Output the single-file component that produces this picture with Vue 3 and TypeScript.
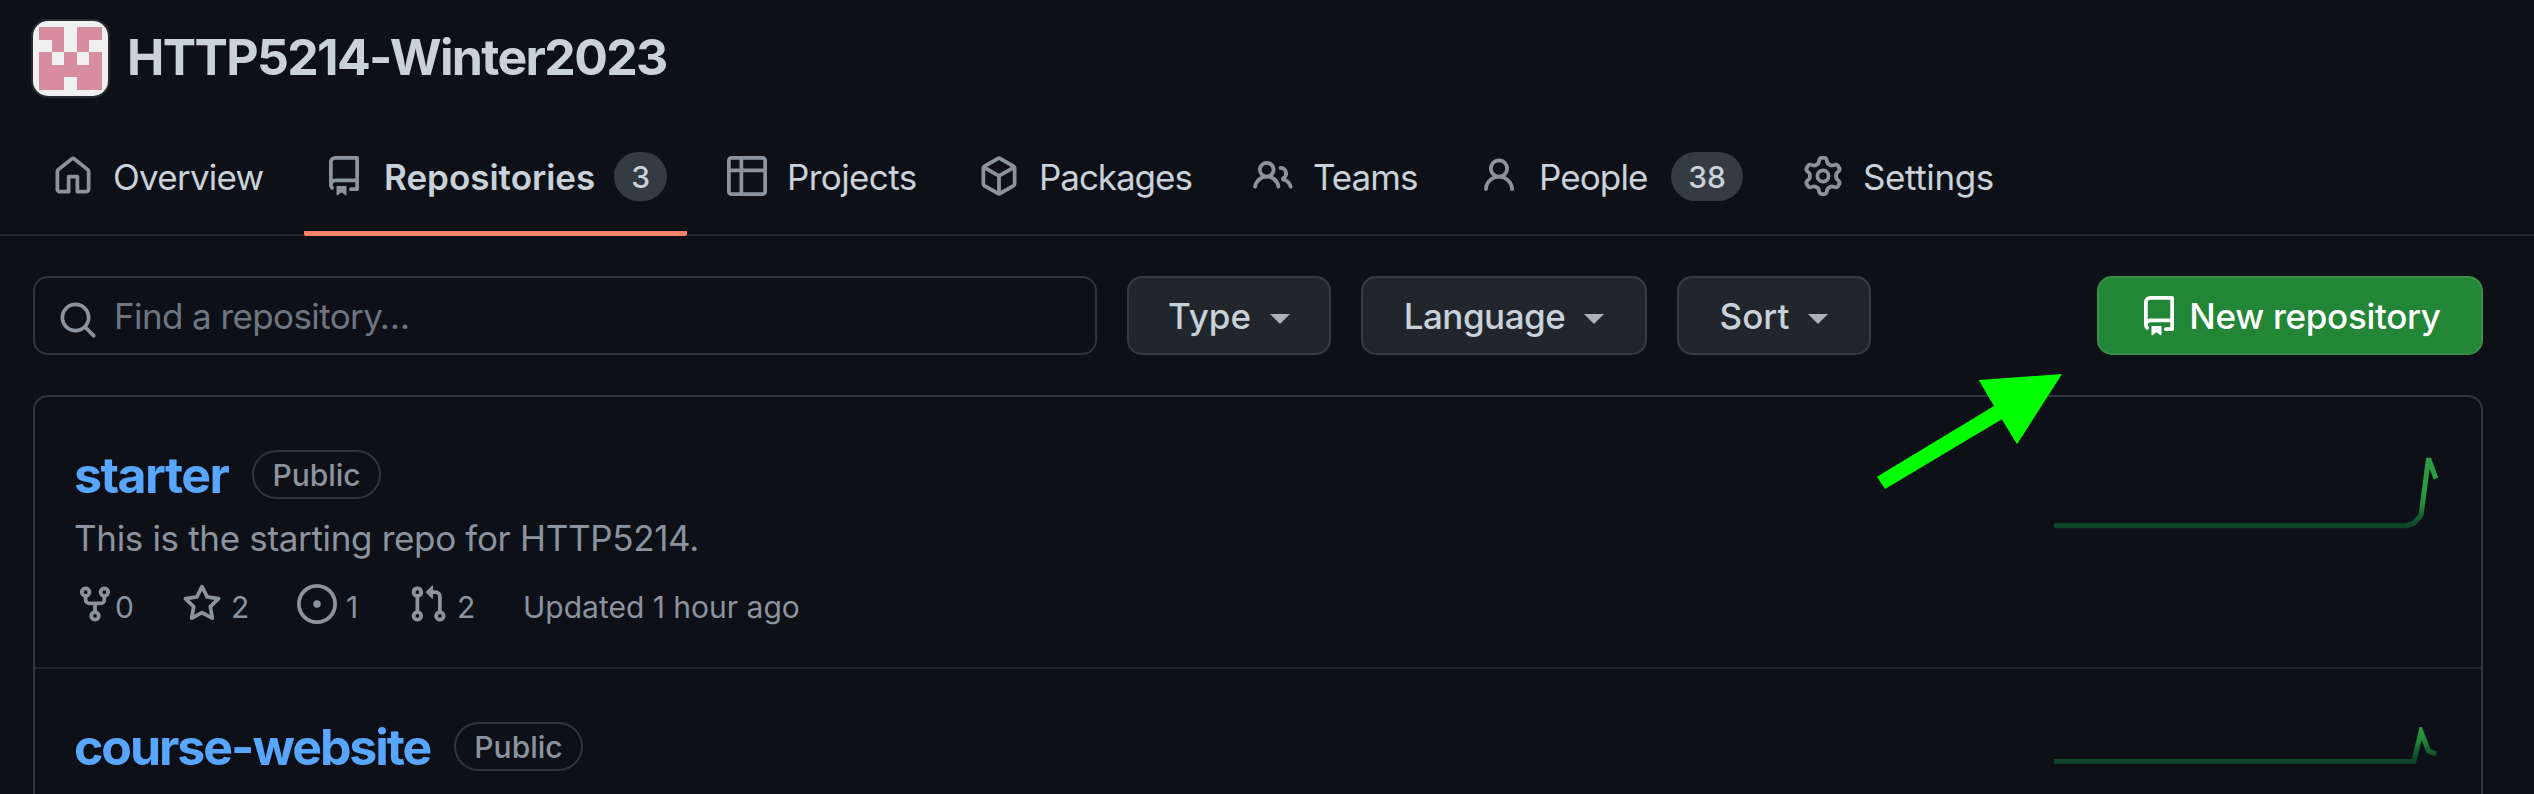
<script setup lang="ts">
interface Tab {
  key: string
  label: string
  icon: string
  count?: number
  active?: boolean
}

interface Stat {
  key: string
  icon: string
  value: number
}

interface Repo {
  name: string
  visibility: string
  description?: string
  updated?: string
  stats: Stat[]
  spark: string
}

const icons: Record<string, string> = {
  home: 'M6.906.664a1.749 1.749 0 0 1 2.187 0l5.25 4.2c.415.332.657.835.657 1.367v7.019A1.75 1.75 0 0 1 13.25 15h-3.5a.75.75 0 0 1-.75-.75V9H7v5.25a.75.75 0 0 1-.75.75h-3.5A1.75 1.75 0 0 1 1 13.25V6.23c0-.531.242-1.034.657-1.366l5.25-4.2Zm1.25 1.171a.25.25 0 0 0-.312 0l-5.25 4.2a.25.25 0 0 0-.094.196v7.019c0 .138.112.25.25.25H5.5V8.25a.75.75 0 0 1 .75-.75h3.5a.75.75 0 0 1 .75.75v5.25h2.75a.25.25 0 0 0 .25-.25V6.23a.25.25 0 0 0-.094-.195Z',
  repo: 'M2 2.5A2.5 2.5 0 0 1 4.5 0h8.75a.75.75 0 0 1 .75.75v12.5a.75.75 0 0 1-.75.75h-2.5a.75.75 0 0 1 0-1.5h1.75v-2h-8a1 1 0 0 0-.714 1.7.75.75 0 1 1-1.072 1.05A2.495 2.495 0 0 1 2 11.5Zm10.5-1h-8a1 1 0 0 0-1 1v6.708A2.486 2.486 0 0 1 4.5 9h8ZM5 12.25a.25.25 0 0 1 .25-.25h3.5a.25.25 0 0 1 .25.25v3.25a.25.25 0 0 1-.4.2l-1.45-1.087a.249.249 0 0 0-.3 0L5.4 15.7a.25.25 0 0 1-.4-.2Z',
  table: 'M0 1.75C0 .784.784 0 1.75 0h12.5C15.216 0 16 .784 16 1.75v12.5A1.75 1.75 0 0 1 14.25 16H1.75A1.75 1.75 0 0 1 0 14.25ZM6.5 6.5v8h7.75a.25.25 0 0 0 .25-.25V6.5Zm8-1.5V1.75a.25.25 0 0 0-.25-.25H6.5V5Zm-13 1.5v7.75c0 .138.112.25.25.25H5v-8ZM5 5V1.5H1.75a.25.25 0 0 0-.25.25V5Z',
  package: 'm8.878.392 5.25 3.045c.54.314.872.89.872 1.514v6.098a1.75 1.75 0 0 1-.872 1.514l-5.25 3.045a1.75 1.75 0 0 1-1.756 0l-5.25-3.045A1.75 1.75 0 0 1 1 11.049V4.951c0-.624.332-1.201.872-1.514L7.122.392a1.75 1.75 0 0 1 1.756 0ZM7.875 1.69l-4.63 2.685L8 7.133l4.755-2.758-4.63-2.685a.248.248 0 0 0-.25 0ZM2.5 5.677v5.372c0 .09.047.171.125.216l4.625 2.683V8.432Zm6.25 8.271 4.625-2.683a.25.25 0 0 0 .125-.216V5.677L8.75 8.432Z',
  people: 'M2 5.5a3.5 3.5 0 1 1 5.898 2.549 5.508 5.508 0 0 1 3.034 4.084.75.75 0 1 1-1.482.235 4 4 0 0 0-7.9 0 .75.75 0 0 1-1.482-.236A5.507 5.507 0 0 1 3.102 8.05 3.493 3.493 0 0 1 2 5.5ZM11 4a3.001 3.001 0 0 1 2.22 5.018 5.01 5.01 0 0 1 2.56 3.012.749.749 0 0 1-.885.954.752.752 0 0 1-.549-.514 3.507 3.507 0 0 0-2.522-2.372.75.75 0 0 1-.574-.73v-.352a.75.75 0 0 1 .416-.672A1.5 1.5 0 0 0 11 5.5.75.75 0 0 1 11 4Zm-5.5-.5a2 2 0 1 0-.001 3.999A2 2 0 0 0 5.5 3.5Z',
  person: 'M10.561 8.073a6.005 6.005 0 0 1 3.432 5.142.75.75 0 1 1-1.498.07 4.5 4.5 0 0 0-8.99 0 .75.75 0 0 1-1.498-.07 6.004 6.004 0 0 1 3.431-5.142 3.999 3.999 0 1 1 5.123 0ZM10.5 5a2.5 2.5 0 1 0-5 0 2.5 2.5 0 0 0 5 0Z',
  gear: 'M8 0a8.2 8.2 0 0 1 .701.031C9.444.095 9.99.645 10.16 1.29l.288 1.107c.018.066.079.158.212.224.231.114.454.243.668.386.123.082.233.09.299.071l1.103-.303c.644-.176 1.392.021 1.82.63.27.385.506.792.704 1.218.315.675.111 1.422-.364 1.891l-.814.806c-.049.048-.098.147-.088.294.016.257.016.515 0 .772-.01.147.038.246.088.294l.814.806c.475.469.679 1.216.364 1.891a7.977 7.977 0 0 1-.704 1.217c-.428.61-1.176.807-1.82.63l-1.102-.302c-.067-.019-.177-.011-.3.071a5.909 5.909 0 0 1-.668.386c-.133.066-.194.158-.211.224l-.29 1.106c-.168.646-.715 1.196-1.458 1.26a8.006 8.006 0 0 1-1.402 0c-.743-.064-1.289-.614-1.458-1.26l-.289-1.106c-.018-.066-.079-.158-.212-.224a5.738 5.738 0 0 1-.668-.386c-.123-.082-.233-.09-.299-.071l-1.103.303c-.644.176-1.392-.021-1.82-.63a8.12 8.12 0 0 1-.704-1.218c-.315-.675-.111-1.422.363-1.891l.815-.806c.05-.048.098-.147.088-.294a6.214 6.214 0 0 1 0-.772c.01-.147-.038-.246-.088-.294l-.815-.806C.635 6.045.431 5.298.746 4.623a7.92 7.92 0 0 1 .704-1.217c.428-.61 1.176-.807 1.82-.63l1.102.302c.067.019.177.011.3-.071.214-.143.437-.272.668-.386.133-.066.194-.158.211-.224l.29-1.106C6.009.645 6.556.095 7.299.03 7.53.01 7.764 0 8 0Zm-.571 1.525c-.036.003-.108.036-.137.146l-.289 1.105c-.147.561-.549.967-.998 1.189-.173.086-.34.183-.5.29-.417.278-.97.423-1.529.27l-1.103-.303c-.109-.03-.175.016-.195.045-.22.312-.412.644-.573.99-.014.031-.021.11.059.19l.815.806c.411.406.562.957.53 1.456a4.709 4.709 0 0 0 0 .582c.032.499-.119 1.05-.53 1.456l-.815.806c-.081.08-.073.159-.059.19.162.346.353.677.573.989.02.03.085.076.195.046l1.102-.303c.56-.153 1.113-.008 1.53.27.161.107.328.204.501.29.447.222.85.629.997 1.189l.289 1.105c.029.109.101.143.137.146a6.6 6.6 0 0 0 1.142 0c.036-.003.108-.036.137-.146l.289-1.105c.147-.561.549-.967.998-1.189.173-.086.34-.183.5-.29.417-.278.97-.423 1.529-.27l1.103.303c.109.029.175-.016.195-.045.22-.313.411-.644.573-.99.014-.031.021-.11-.059-.19l-.815-.806c-.411-.406-.562-.957-.53-1.456a4.709 4.709 0 0 0 0-.582c-.032-.499.119-1.05.53-1.456l.815-.806c.081-.08.073-.159.059-.19a6.464 6.464 0 0 0-.573-.989c-.02-.03-.085-.076-.195-.046l-1.102.303c-.56.153-1.113.008-1.53-.27a4.44 4.44 0 0 0-.501-.29c-.447-.222-.85-.629-.997-1.189l-.289-1.105c-.029-.11-.101-.143-.137-.146a6.6 6.6 0 0 0-1.142 0ZM11 8a3 3 0 1 1-6 0 3 3 0 0 1 6 0ZM9.5 8a1.5 1.5 0 1 0-3.001.001A1.5 1.5 0 0 0 9.5 8Z',
  search: 'M11.5 7a4.499 4.499 0 1 1-8.998 0A4.499 4.499 0 0 1 11.5 7Zm-.82 4.74a6 6 0 1 1 1.06-1.06l3.04 3.04a.75.75 0 1 1-1.06 1.06l-3.04-3.04Z',
  fork: 'M5 5.372v.878c0 .414.336.75.75.75h4.5a.75.75 0 0 0 .75-.75v-.878a2.25 2.25 0 1 1 1.5 0v.878a2.25 2.25 0 0 1-2.25 2.25h-1.5v2.128a2.251 2.251 0 1 1-1.5 0V8.5h-1.5A2.25 2.25 0 0 1 3.5 6.25v-.878a2.25 2.25 0 1 1 1.5 0ZM5 3.25a.75.75 0 1 0-1.5 0 .75.75 0 0 0 1.5 0Zm6.75.75a.75.75 0 1 0 0-1.5.75.75 0 0 0 0 1.5Zm-3 8.75a.75.75 0 1 0-1.5 0 .75.75 0 0 0 1.5 0Z',
  star: 'M8 .25a.75.75 0 0 1 .673.418l1.882 3.815 4.21.612a.75.75 0 0 1 .416 1.279l-3.046 2.97.719 4.192a.751.751 0 0 1-1.088.791L8 12.347l-3.766 1.98a.75.75 0 0 1-1.088-.79l.72-4.194L.818 6.374a.75.75 0 0 1 .416-1.28l4.21-.611L7.327.668A.75.75 0 0 1 8 .25Zm0 2.445L6.615 5.5a.75.75 0 0 1-.564.41l-3.097.45 2.24 2.184a.75.75 0 0 1 .216.664l-.528 3.084 2.769-1.456a.75.75 0 0 1 .698 0l2.77 1.456-.53-3.084a.75.75 0 0 1 .216-.664l2.24-2.183-3.096-.45a.75.75 0 0 1-.564-.41L8 2.694Z',
  issue: 'M8 9.5a1.5 1.5 0 1 0 0-3 1.5 1.5 0 0 0 0 3ZM8 0a8 8 0 1 1 0 16A8 8 0 0 1 8 0ZM1.5 8a6.5 6.5 0 1 0 13 0 6.5 6.5 0 0 0-13 0Z',
  pull: 'M1.5 3.25a2.25 2.25 0 1 1 3 2.122v5.256a2.251 2.251 0 1 1-1.5 0V5.372A2.25 2.25 0 0 1 1.5 3.25Zm5.677-.177L9.573.677A.25.25 0 0 1 10 .854V2.5h1A2.5 2.5 0 0 1 13.5 5v5.628a2.251 2.251 0 1 1-1.5 0V5a1 1 0 0 0-1-1h-1v1.646a.25.25 0 0 1-.427.177L7.177 3.427a.25.25 0 0 1 0-.354ZM3.75 2.5a.75.75 0 1 0 0 1.5.75.75 0 0 0 0-1.5Zm0 9.5a.75.75 0 1 0 0 1.5.75.75 0 0 0 0-1.5Zm8.25.75a.75.75 0 1 0 1.5 0 .75.75 0 0 0-1.5 0Z',
}

const tabs: Tab[] = [
  { key: 'overview', label: 'Overview', icon: 'home' },
  { key: 'repositories', label: 'Repositories', icon: 'repo', count: 3, active: true },
  { key: 'projects', label: 'Projects', icon: 'table' },
  { key: 'packages', label: 'Packages', icon: 'package' },
  { key: 'teams', label: 'Teams', icon: 'people' },
  { key: 'members', label: 'People', icon: 'person', count: 38 },
  { key: 'settings', label: 'Settings', icon: 'gear' },
]

const filters: string[] = ['Type', 'Language', 'Sort']

const repos: Repo[] = [
  {
    name: 'starter',
    visibility: 'Public',
    description: 'This is the starting repo for HTTP5214.',
    updated: 'Updated 1 hour ago',
    stats: [
      { key: 'forks', icon: 'fork', value: 0 },
      { key: 'stars', icon: 'star', value: 2 },
      { key: 'issues', icon: 'issue', value: 1 },
      { key: 'pulls', icon: 'pull', value: 2 },
    ],
    spark: '0,70.7 352,70.7 359.5,68.5 367,60.5 374.5,3.4 382,23.7',
  },
  {
    name: 'course-website',
    visibility: 'Public',
    stats: [],
    spark: '0,34.5 359.8,34.5 367,4.8 374.5,24 382,26.8',
  },
]

// Identicon pattern, one string per row of the 5x5 grid
const pattern: string[] = ['11011', '01010', '10101', '11111', '11011']
const cells = pattern.flatMap((row, y) =>
  [...row].map((on, x) => ({ x, y, on: on === '1' })).filter((c) => c.on),
)
</script>

<template>
  <div class="page">
    <header class="org">
      <svg class="avatar" viewBox="0 0 60 60" shape-rendering="crispEdges">
        <rect width="60" height="60" fill="#f0f0f0" />
        <rect
          v-for="c in cells"
          :key="`${c.x}-${c.y}`"
          :x="5 + c.x * 10"
          :y="5 + c.y * 10"
          width="10"
          height="10"
          fill="#d88c9f"
        />
      </svg>
      <h1 class="org-name">HTTP5214-Winter2023</h1>
    </header>

    <nav class="tabs">
      <a v-for="t in tabs" :key="t.key" class="tab" :class="[t.key, { active: t.active }]">
        <svg class="icon" viewBox="0 0 16 16"><path :d="icons[t.icon]" fill-rule="evenodd" /></svg>
        <span class="label">{{ t.label }}</span>
        <span v-if="t.count" class="counter">{{ t.count }}</span>
      </a>
    </nav>

    <div class="toolbar">
      <div class="search">
        <svg class="icon" viewBox="0 0 16 16"><path :d="icons.search" fill-rule="evenodd" /></svg>
        <span class="placeholder">Find a repository…</span>
      </div>
      <button v-for="f in filters" :key="f" class="filter" :class="f.toLowerCase()">
        <span>{{ f }}</span><i class="caret"></i>
      </button>
      <button class="create">
        <svg class="icon" viewBox="0 0 16 16"><path :d="icons.repo" fill-rule="evenodd" /></svg>
        <span>New repository</span>
      </button>
    </div>

    <ul class="list">
      <li v-for="(r, i) in repos" :key="r.name" class="row">
        <div class="info">
          <div class="heading">
            <a class="name" :class="r.name">{{ r.name }}</a>
            <span class="pill">{{ r.visibility }}</span>
          </div>
          <p v-if="r.description" class="description">{{ r.description }}</p>
          <div v-if="r.stats.length" class="meta">
            <span v-for="s in r.stats" :key="s.key" class="stat" :class="s.key">
              <svg class="icon" viewBox="0 0 16 16"><path :d="icons[s.icon]" fill-rule="evenodd" /></svg>
              <span>{{ s.value }}</span>
            </span>
            <span class="updated">{{ r.updated }}</span>
          </div>
        </div>
        <svg class="spark" viewBox="0 0 387 75">
          <defs>
            <linearGradient
              :id="`spark-${i}`"
              gradientUnits="userSpaceOnUse"
              x1="0"
              x2="0"
              :y1="i === 0 ? 75 : 38"
              :y2="i === 0 ? 0 : -37"
            >
              <stop offset="0" stop-color="#0e3a27" />
              <stop offset=".1" stop-color="#0e4e2a" />
              <stop offset=".2" stop-color="#14652e" />
              <stop offset=".32" stop-color="#238636" />
              <stop offset=".5" stop-color="#2c9c41" />
            </linearGradient>
          </defs>
          <polyline
            :points="r.spark"
            fill="none"
            :stroke="`url(#spark-${i})`"
            stroke-width="5"
          />
        </svg>
      </li>
    </ul>

    <svg class="arrow" viewBox="0 0 185 115">
      <polygon points="0,102.7 117,32 101.7,6 185,0 140,70.3 124.8,45.3 8,115" fill="#00ff00" />
    </svg>
  </div>
</template>

<style>
html,
body {
  margin: 0;
  background: #0d1117;
  overflow: hidden;
}
</style>

<style scoped>
.page {
  position: relative;
  box-sizing: border-box;
  width: 2534px;
  height: 794px;
  overflow: hidden;
  background: #0d1117;
  color: #c9d1d9;
  font-family: Inter, "Liberation Sans", sans-serif;
  font-size: 35px;
}

.icon {
  width: 40px;
  height: 40px;
  flex: none;
  fill: currentColor;
}

.org {
  display: flex;
  align-items: center;
  gap: 19px;
  height: 75px;
  padding: 21px 33px 0;
}

.avatar {
  width: 75px;
  height: 75px;
  border-radius: 15px;
  box-shadow: 0 0 0 2px #272b30;
}

.org-name {
  margin: 0 0 3px;
  font-size: 50px;
  font-weight: 700;
  line-height: 60px;
  letter-spacing: -1.65px;
  white-space: nowrap;
}

.tabs {
  display: flex;
  gap: 20px;
  box-sizing: border-box;
  height: 120px;
  margin-top: 20px;
  padding: 0 33px;
  border-bottom: 2px solid #21262d;
}

.tab {
  display: flex;
  align-items: center;
  box-sizing: border-box;
  height: 120px;
  padding: 0 20px;
  white-space: nowrap;
  border-bottom: 5px solid transparent;
}

.tab .icon {
  margin-right: 20px;
  margin-top: 5px;
  color: #8b949e;
}

.label {
  margin-top: 7px;
  line-height: 50px;
}

.overview {
  width: 251px;
  letter-spacing: -0.75px;
}

.repositories {
  width: 383px;
}

.projects {
  width: 232px;
  letter-spacing: -0.6px;
}

.packages {
  width: 254px;
  letter-spacing: -1.05px;
}

.teams {
  width: 206px;
  letter-spacing: -1px;
}

.members {
  width: 304px;
  letter-spacing: -0.9px;
}

.settings {
  letter-spacing: -0.4px;
}

.tab.active {
  border-bottom-color: #f78166;
  border-radius: 0 0 2px 2px;
}

.tab.active .label {
  font-weight: 600;
}

.counter {
  box-sizing: border-box;
  height: 49px;
  margin-top: 6px;
  margin-left: auto;
  padding: 0 17px;
  border-radius: 25px;
  background: #343b43;
  font-size: 30px;
  font-weight: 500;
  letter-spacing: 0;
  line-height: 50px;
}

.toolbar {
  display: flex;
  align-items: center;
  height: 79px;
  margin-top: 40px;
  padding: 0 51px 0 33px;
}

.search {
  display: flex;
  align-items: center;
  box-sizing: border-box;
  width: 1064px;
  height: 79px;
  padding-left: 23px;
  border: 2px solid #30363d;
  border-radius: 15px;
}

.search .icon {
  margin-top: 9px;
  color: #8b949e;
}

.placeholder {
  margin-left: 16px;
  color: #6e7681;
  letter-spacing: -0.6px;
}

.filter,
.create {
  display: flex;
  align-items: center;
  justify-content: center;
  box-sizing: border-box;
  height: 79px;
  padding: 0;
  border: 2px solid #363b42;
  border-radius: 15px;
  background: #21262d;
  color: #c9d1d9;
  font: inherit;
  font-weight: 500;
  white-space: nowrap;
}

.filter {
  width: 204px;
  margin-left: 30px;
}

.filter.language {
  width: 286px;
  letter-spacing: -0.5px;
}

.filter.sort {
  width: 194px;
}

.caret {
  margin: 7px 0 0 19px;
  border: 10px solid transparent;
  border-top-color: #a9b1b9;
  border-bottom: 0;
}

.create {
  width: 386px;
  margin-left: auto;
  border-color: #3a9049;
  background: #238636;
  color: #fff;
  letter-spacing: -0.3px;
}

.create .icon {
  margin-right: 10px;
}

.list {
  box-sizing: border-box;
  width: 2450px;
  height: 440px;
  margin: 40px 0 0 33px;
  padding: 0;
  border: 2px solid #30363d;
  border-radius: 15px;
  list-style: none;
}

.row {
  display: flex;
  justify-content: space-between;
  box-sizing: border-box;
  height: 272px;
  padding: 53px 40px 0;
}

.row:first-child {
  border-bottom: 2px solid #21262d;
}

.heading {
  display: flex;
  align-items: flex-start;
  height: 49px;
}

.name {
  margin: -5px 0 0 -1px;
  color: #58a6ff;
  font-size: 50px;
  font-weight: 700;
  line-height: 60px;
  white-space: nowrap;
}

.name.starter {
  letter-spacing: -1.5px;
}

.name.course-website {
  letter-spacing: -2.05px;
}

.pill {
  box-sizing: border-box;
  height: 49px;
  margin-left: 24px;
  padding: 0 18px;
  border: 2px solid #30363d;
  border-radius: 25px;
  color: #8b949e;
  font-size: 30px;
  font-weight: 500;
  line-height: 47px;
}

.description {
  margin: 13px 0 0 -1px;
  color: #8b949e;
  line-height: 52px;
  letter-spacing: -0.33px;
  white-space: nowrap;
}

.meta {
  display: flex;
  height: 40px;
  margin-top: 20px;
  color: #8b949e;
  font-size: 30px;
  line-height: 46px;
  white-space: nowrap;
}

.stat {
  display: flex;
}

.forks {
  width: 107px;
}

.stars {
  width: 115px;
}

.issues {
  width: 111px;
}

.pulls {
  width: 115px;
}

.stars span,
.issues span,
.pulls span {
  margin-left: 9px;
}

.spark {
  width: 387px;
  height: 75px;
  margin-top: 5px;
}

.arrow {
  position: absolute;
  top: 374px;
  left: 1877px;
  width: 185px;
  height: 115px;
}
</style>
